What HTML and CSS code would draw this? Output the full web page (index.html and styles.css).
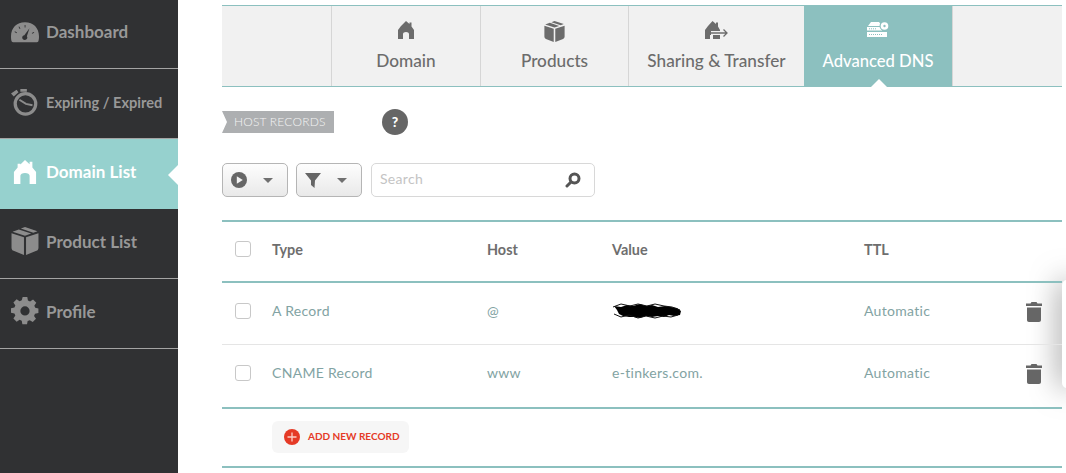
FILE: index.html
```html
<!DOCTYPE html>
<html lang="en">
<head>
<meta charset="utf-8">
<title>Advanced DNS</title>
<link rel="stylesheet" href="styles.css">
</head>
<body>
<div class="app">
  <nav class="side">
    <a class="side-item">
      <svg class="side-icon" viewBox="0 0 30 22"><path fill-rule="evenodd" d="M.8 21.200C.2 20 0 18 0 15.500 0 6.500 6 .5 15 .5S30 6.500 30 15.500c0 2.500-.2 4.500-.8 5.700-.3.5-.8.8-1.500.8H2.300c-.7 0-1.200-.3-1.500-.8zM19.800 7l-5.500 7.500c-1.300.2-2.300 1.200-2.300 2.500 0 1.400 1.200 2.500 2.700 2.500s2.800-1.100 2.800-2.500c0-.6-.2-1.100-.5-1.500zM14.600 3.500v2.800h.9V3.500zM8 5.500l1.300 2.200.8-.4-1.300-2.200zM3.800 11l2.200 1.300.4-.7-2.200-1.300zM24.500 11l-2.200 1.200.4.700 2.200-1.200z" fill="#8c8c8c"/></svg>
      <span>Dashboard</span>
    </a>
    <a class="side-item small">
      <svg class="side-icon" viewBox="0 0 30 30"><circle cx="15.500" cy="17" r="11" fill="none" stroke="#8c8c8c" stroke-width="3.500"/><path d="M9 12.500l7 4.500 7 1.500" stroke="#8c8c8c" stroke-width="2" fill="none"/><path d="M0 6l6-4 2 2.500-5 4.500zM10 1h7v3h-7z" fill="#8c8c8c"/></svg>
      <span>Expiring / Expired</span>
    </a>
    <a class="side-item active">
      <svg class="side-icon home" viewBox="0 0 24 26"><path fill="#fff" d="M12 0l5 4.500V2h3v6l4 5v13h-7v-9c0-1.500-2-3-5-3s-5 1.500-5 3v9H0V13L4 8V4h3v1z"/></svg>
      <span>Domain List</span>
    </a>
    <a class="side-item">
      <svg class="side-icon" viewBox="0 0 26 27"><path fill="#8c8c8c" d="M13 0l12 4-4 1.500L9 1.500zM7 2.300l12 4L13 8.500 1 4.500zM0 6l12 4v17L2 23c-1.200-.5-2-1.500-2-3zM26 6v14c0 1.500-.8 2.500-2 3l-10 4V10z"/></svg>
      <span>Product List</span>
    </a>
    <a class="side-item">
      <svg class="side-icon" viewBox="0 0 26 26"><path fill="#8c8c8c" fill-rule="evenodd" d="M10.500-2h5l.7 3.700 2.300 1 3.200-2.100 3.500 3.500-2.100 3.200 1 2.300 3.400.7v5l-3.700.7-1 2.300 2.100 3.200-3.500 3.500-3.200-2.100-2.300 1-.7 3.400h-5l-.7-3.700-2.300-1-3.200 2.100-3.500-3.500 2.100-3.200-1-2.300-3.700-.7v-5l3.700-.7 1-2.300-2.100-3.200 3.500-3.500 3.200 2.100 2.300-1zM13 8a5 5 0 1 0 0 10 5 5 0 0 0 0-10z" transform="translate(1.800 1.800) scale(.86)"/></svg>
      <span>Profile</span>
    </a>
  </nav>

  <main class="main">
    <div class="tabs">
      <div class="tab-lead"></div>
      <a class="tab tab-domain">
        <svg class="tab-icon" width="16" height="18" viewBox="0 0 16 18"><path fill="#6c6c6c" d="M8 0l3.500 3V1.500h2v4L16 9v9h-5v-5c0-1.300-1.300-2-3-2s-3 .7-3 2v5H0V9l3-4z"/></svg>
        <span>Domain</span>
      </a>
      <a class="tab tab-products">
        <svg class="tab-icon" width="21" height="21" viewBox="0 0 26 27"><path fill="#6c6c6c" d="M13 0l12 4-4 1.500L9 1.500zM7 2.300l12 4L13 8.500 1 4.500zM0 6l12 4v17L2 23c-1.200-.5-2-1.500-2-3zM26 6v14c0 1.500-.8 2.500-2 3l-10 4V10z"/></svg>
        <span>Products</span>
      </a>
      <a class="tab tab-sharing">
        <svg class="tab-icon" width="23" height="18" viewBox="0 0 23 18"><path fill="#6c6c6c" d="M7.500 0l3.500 3V1.500h2v4L15 9v9H0V9l3-4z"/><path stroke="#f1f1f1" stroke-width="4" d="M6 12h13"/><path fill="#f1f1f1" d="M5 14h3v4H5z"/><path stroke="#6c6c6c" stroke-width="1.300" fill="none" d="M6 12h15.500M18.500 8.500L22 12l-3.500 3.500"/></svg>
        <span>Sharing &amp; Transfer</span>
      </a>
      <a class="tab tab-active">
        <svg class="tab-icon" width="24" height="16" viewBox="0 0 24 16"><path fill="#fff" d="M5 1h8l3 4H2zM1 6h15v3.500H1zM1 11h20v5H1z"/><circle cx="18.500" cy="5" r="5" fill="#8cc0bf"/><circle cx="18.500" cy="5" r="3.800" fill="#fff"/><circle cx="18.500" cy="5" r="1.200" fill="#8cc0bf"/><path stroke="#8cc0bf" stroke-width="1" stroke-dasharray="1 1" d="M3 13.500h14M3 7.800h8"/></svg>
        <span>Advanced DNS</span>
      </a>
      <div class="tab-rest"></div>
    </div>

    <div class="section-head">
      <span class="ribbon">HOST RECORDS</span>
      <span class="help">?</span>
    </div>

    <div class="toolbar">
      <button class="tool-btn">
        <svg width="16" height="16" viewBox="0 0 16 16"><circle cx="8" cy="8" r="8" fill="#666"/><path d="M5.800 4.300l6 3.700-6 3.700z" fill="#f2f2f2"/></svg>
        <i class="caret"></i>
      </button>
      <button class="tool-btn">
        <svg width="16" height="16" viewBox="0 0 16 16"><path d="M0 1h16L10 8.500 9.500 16 6 13l0-4.500z" fill="#666"/></svg>
        <i class="caret"></i>
      </button>
      <div class="search">
        <span class="search-text">Search</span>
        <svg width="16" height="16" viewBox="0 0 16 16"><circle cx="9.500" cy="6.500" r="4.500" fill="none" stroke="#555" stroke-width="3"/><path d="M5.500 10.500l-3.500 3.500" stroke="#555" stroke-width="3" stroke-linecap="round"/></svg>
      </div>
    </div>

    <div class="table">
      <div class="row head">
        <span class="cell-check"><i class="check"></i></span>
        <span class="cell-type">Type</span>
        <span class="cell-host">Host</span>
        <span class="cell-value">Value</span>
        <span class="cell-ttl">TTL</span>
      </div>
      <div class="row body">
        <span class="cell-check"><i class="check"></i></span>
        <span class="cell-type">A Record</span>
        <span class="cell-host">@</span>
        <span class="cell-value">
          <svg class="scribble" width="71" height="16" viewBox="0 0 71 16"><path d="M2 3l7 1 6-2 6 1 7-2 6 2 6-1 6 2 7-1 6 1 6 1 4 3-1 4-6 1-5-1-5 2-6-1-6 1-6-1-6 2-6-1-5 0-6-1-4-2-2-4z" fill="#000"/><path d="M1 4l8-3 9 2 8-2 9 2 8-2 9 2 8 1 8 3M2 11l7 3 8-2 9 3 8-2 9 2 8-2 8 1 7-2" stroke="#111" stroke-width="1" fill="none"/></svg>
        </span>
        <span class="cell-ttl">Automatic</span>
        <svg class="trash" width="16" height="20" viewBox="0 0 16 20"><path fill="#666" d="M5.500 0h5l1 1.500H16v2.500H0V1.500h4.500zM1 5.500h14v12.500c0 1.200-.8 2-2 2H3c-1.200 0-2-.8-2-2z"/></svg>
      </div>
      <div class="row body last">
        <span class="cell-check"><i class="check"></i></span>
        <span class="cell-type">CNAME Record</span>
        <span class="cell-host">www</span>
        <span class="cell-value">e-tinkers.com.</span>
        <span class="cell-ttl">Automatic</span>
        <svg class="trash" width="16" height="20" viewBox="0 0 16 20"><path fill="#666" d="M5.500 0h5l1 1.500H16v2.500H0V1.500h4.500zM1 5.500h14v12.500c0 1.200-.8 2-2 2H3c-1.200 0-2-.8-2-2z"/></svg>
      </div>
      <div class="add-row">
        <a class="add-btn">
          <svg width="16" height="16" viewBox="0 0 16 16"><circle cx="8" cy="8" r="8" fill="#e53a26"/><path d="M8 3.500v9M3.500 8h9" stroke="#fbd0c8" stroke-width="1.300"/></svg>
          <span class="add-label">ADD NEW RECORD</span>
        </a>
      </div>
    </div>
    <div class="overlay"></div>
  </main>
</div>
</body>
</html>
```
FILE: styles.css
```css
* { box-sizing: border-box; }
html, body { margin: 0; height: 473px; overflow: hidden; background: #fff; }
body { font-family: Lato, "Open Sans", sans-serif; color: #666; }
.app { display: flex; width: 1066px; height: 473px; }

.side { width: 178px; flex: none; background: #303133; display: flex; flex-direction: column; }
.side-item { height: 70px; display: flex; align-items: center; gap: 7px; padding: 0 0 5px 11px; border-bottom: 1px solid #a4a4a4; color: #989898; font-size: 17px; font-weight: 700; position: relative; }
.side-item:first-child { height: 69px; }
.side-item.small { padding-bottom: 3px; font-size: 14.600px; }
.side-icon { width: 28px; height: 28px; flex: none; }
.side-item.active { background: #96d1ce; color: #fff; border-bottom: 0; }
.side-item.active::after { content: ""; position: absolute; right: 0; top: 26px; border: 10px solid transparent; border-left: 0; border-right-color: #fff; }
.home { padding: 2px; }

.main { flex: 1; padding: 5px 4px 0 44px; position: relative; }
.tabs { display: flex; height: 82px; background: #f1f1f1; border-top: 1px solid #8cc0bf; border-bottom: 1px solid #8cc0bf; }
.tab-lead { width: 109px; }
.tab { display: flex; flex-direction: column; align-items: center; border-left: 1px solid #d6d6d6; font-size: 17.200px; font-weight: 500; color: #6c6c6c; padding-top: 15px; position: relative; }
.tab span { position: absolute; top: 44px; white-space: nowrap; }
.tab-domain { width: 149px; }
.tab-products { width: 148px; }
.tab-sharing { width: 176px; }
.tab-active { width: 149px; background: #8cc0bf; color: #fff; border-left: 0; border-right: 1px solid #d6d6d6; font-size: 16.600px; }
.tab-active span { top: 45px; }
.tab-active::after { content: ""; position: absolute; bottom: -1px; left: 67px; border: 8px solid transparent; border-top: 0; border-bottom-color: #fff; }
.tab-rest { flex: 1; }

.section-head { display: flex; align-items: center; margin-top: 22px; height: 26px; }
.ribbon { width: 112px; height: 22px; background: #adafb1; color: #f4f4f4; font-size: 12px; font-weight: 300; letter-spacing: .2px; line-height: 21px; padding-left: 12px; clip-path: polygon(0 0, 100% 0, 100% 100%, 0 100%, 5px 50%); white-space: nowrap; }
.help { width: 26px; height: 26px; border-radius: 50%; background: #666; color: #fff; font-weight: 900; font-size: 14px; text-align: center; line-height: 26px; margin-left: 48px; }

.toolbar { display: flex; margin-top: 28px; gap: 8px; }
.tool-btn { width: 66px; height: 34px; border: 1px solid #b5b5b5; border-radius: 5px; background: linear-gradient(#fdfdfd, #e9e9e9); display: flex; align-items: center; justify-content: space-between; padding: 0 14px 0 8px; }
.caret { border: 5px solid transparent; border-bottom: 0; border-top: 5px solid #707070; }
.search { width: 224px; height: 34px; margin-left: 1px; border: 1px solid #d8d8d8; border-radius: 5px; display: flex; align-items: center; justify-content: space-between; padding: 0 13px 0 8px; }
.search-text { color: #c4c4c4; font-size: 14px; letter-spacing: .3px; padding-bottom: 4px; }

.table { margin-top: 23px; border-top: 2px solid #8cc0bf; position: relative; z-index: 1; }
.row { display: flex; align-items: center; font-size: 14px; color: #82a3a3; }
.row.head { height: 61px; border-bottom: 2px solid #8cc0bf; color: #6e6e6e; font-weight: 700; font-size: 14.400px; padding-bottom: 4px; }
.row.head .check { margin-top: -2px; }
.row.body { height: 62px; border-bottom: 1px solid #e5e5e5; letter-spacing: .3px; padding-bottom: 6px; }
.row.body.last { height: 64px; border-bottom: 2px solid #8cc0bf; padding-bottom: 7px; }
.cell-check { width: 50px; padding-left: 13px; display: flex; }
.check { width: 16px; height: 16px; border: 1px solid #c8c8c8; border-radius: 3px; display: block; }
.cell-type { width: 215px; }
.cell-host { width: 125px; }
.cell-value { width: 252px; display: flex; }
.cell-ttl { width: 162px; }
.trash { flex: none; margin-top: 2px; }
.add-row { height: 59px; border-bottom: 2px solid #8cc0bf; padding: 12px 0 0 50px; }
.add-btn { display: inline-flex; width: 137px; height: 32px; align-items: center; gap: 8px; padding-left: 12px; background: #f6f6f6; border-radius: 6px; color: #e53a26; font-size: 10px; font-weight: 700; }
.add-label { padding-bottom: 2px; }

.overlay { position: absolute; left: 884px; top: 280px; width: 12px; height: 108px; background: #fff; border-radius: 5px; box-shadow: 0 0 30px rgba(0,0,0,.6); }
```
